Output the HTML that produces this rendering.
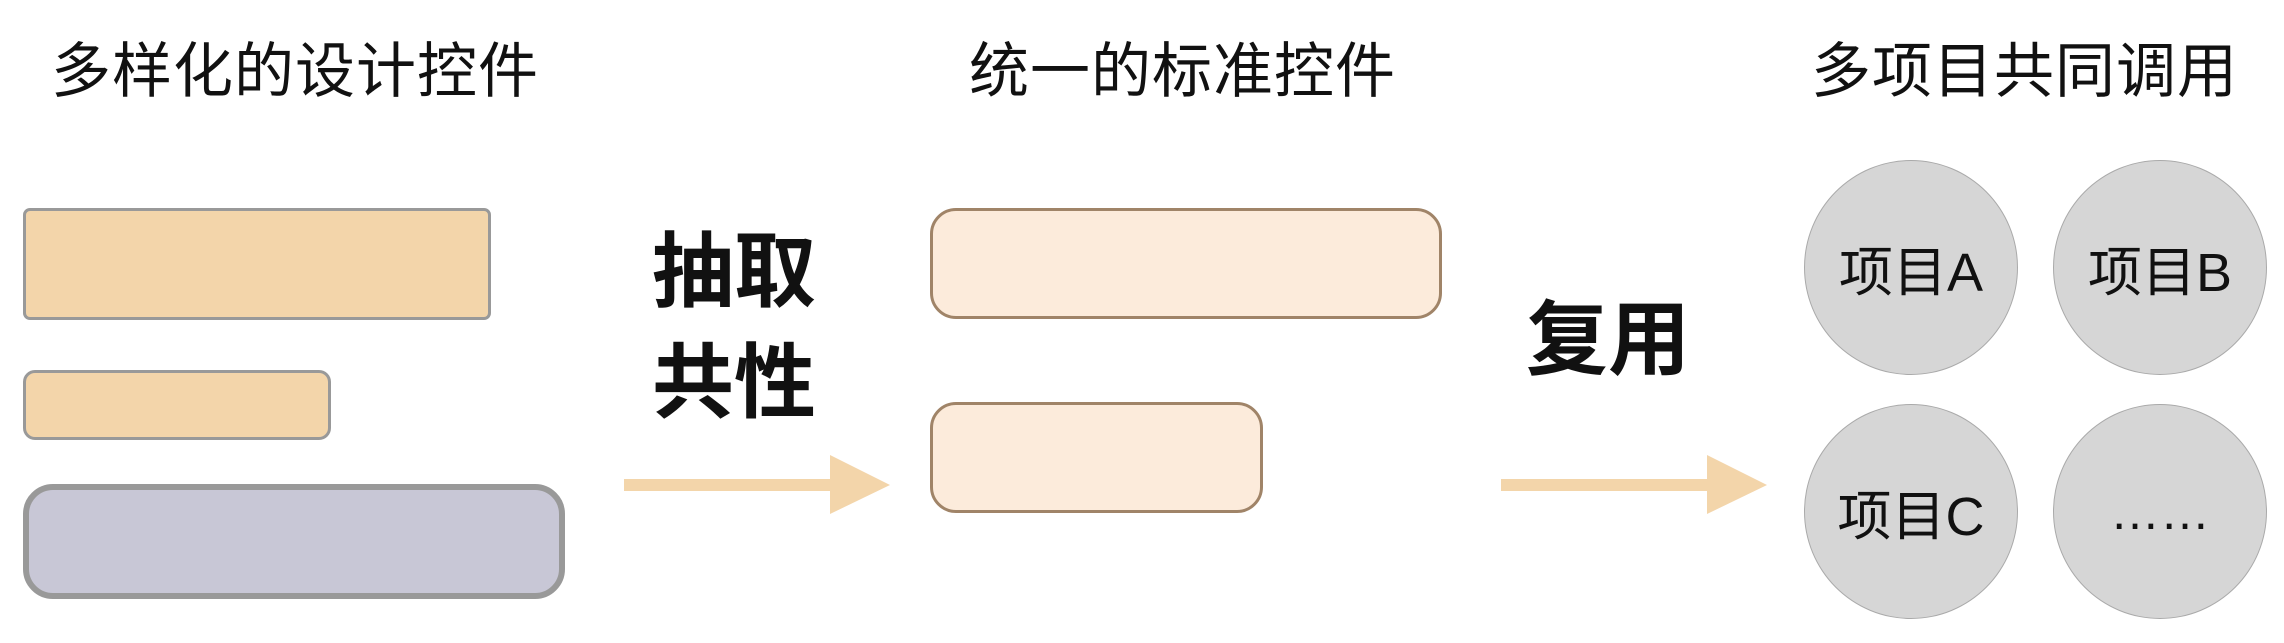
<!DOCTYPE html>
<html><head><meta charset="utf-8"><style>
body{margin:0;width:2284px;height:643px;background:#fff;position:relative;overflow:hidden;font-family:"Liberation Sans","Noto Sans CJK SC",sans-serif;color:#111}
.a{position:absolute}
.t{font-size:60px;line-height:1;white-space:nowrap;letter-spacing:1px}
.b{font-size:82px;font-weight:bold;line-height:1}
.c{position:absolute;width:212px;height:213px;border-radius:50%;background:#d6d6d6;border:1px solid #aaa;display:flex;align-items:center;justify-content:center;font-size:54px}
</style></head><body>
<div class="a t" style="left:51px;top:42px">多样化的设计控件</div>
<div class="a t" style="left:969px;top:42px">统一的标准控件</div>
<div class="a t" style="left:1811px;top:42px">多项目共同调用</div>

<div class="a" style="left:23px;top:208px;width:462px;height:106px;background:#f3d5aa;border:3px solid #999;border-radius:7px"></div>
<div class="a" style="left:23px;top:370px;width:302px;height:64px;background:#f3d5aa;border:3px solid #999;border-radius:12px"></div>
<div class="a" style="left:23px;top:484px;width:530px;height:103px;background:#c8c7d6;border:6px solid #999;border-radius:30px"></div>

<div class="a b" style="left:652px;top:232px">抽取</div>
<div class="a b" style="left:652px;top:343px">共性</div>

<svg class="a" style="left:0;top:0" width="2284" height="643">
<rect x="624" y="479" width="210" height="12" fill="#f3d5aa"/>
<polygon points="830,455 890,485 830,514" fill="#f3d5aa"/>
<rect x="1501" y="479" width="210" height="12" fill="#f3d5aa"/>
<polygon points="1707,455 1767,485 1707,514" fill="#f3d5aa"/>
</svg>

<div class="a" style="left:930px;top:208px;width:506px;height:105px;background:#fcebdb;border:3px solid #a08468;border-radius:26px"></div>
<div class="a" style="left:930px;top:402px;width:327px;height:105px;background:#fcebdb;border:3px solid #a08468;border-radius:26px"></div>

<div class="a b" style="left:1526px;top:300px">复用</div>

<div class="c" style="left:1804px;top:160px">项目A</div>
<div class="c" style="left:2053px;top:160px">项目B</div>
<div class="c" style="left:1804px;top:404px">项目C</div>
<div class="c" style="left:2053px;top:404px;font-size:50px">……</div>
</body></html>
